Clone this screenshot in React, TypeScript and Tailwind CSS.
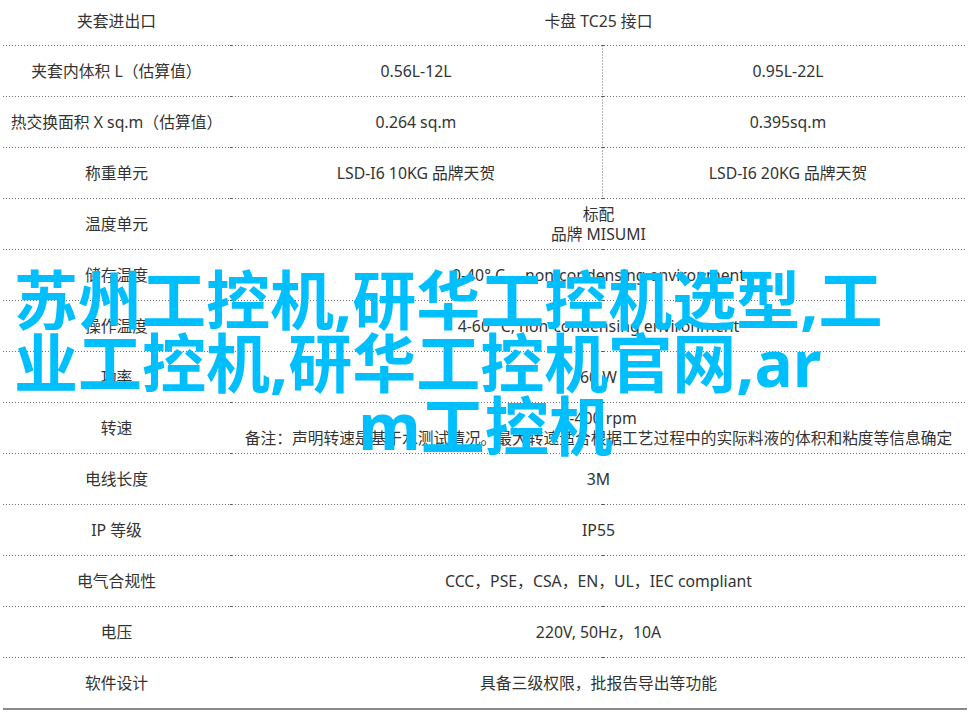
const FONT = "font-['Noto_Sans','Noto_Sans_CJK_SC',sans-serif]";
const DOTS = 'bg-[repeating-linear-gradient(90deg,#6f6f6f_0_1px,#ffffff_1px_3px)]';

type Row = { label: string; a: string; b?: string; note?: string };

const ROWS: Row[] = [
  { label: '夹套进出口', a: '卡盘 TC25 接口' },
  { label: '夹套内体积 L（估算值）', a: '0.56L-12L', b: '0.95L-22L' },
  { label: '热交换面积 X sq.m（估算值）', a: '0.264 sq.m', b: '0.395sq.m' },
  { label: '称重单元', a: 'LSD-I6 10KG 品牌天贺', b: 'LSD-I6 20KG 品牌天贺' },
  { label: '温度单元', a: '标配', note: '品牌 MISUMI' },
  { label: '储存温度', a: '0-40° C， non-condensing environment' },
  { label: '操作温度', a: '4-60° C, non-condensing environment' },
  { label: '功率', a: '60 W' },
  { label: '转速', a: '0-400 rpm', note: '备注：声明转速是基于水测试情况。最大转速适合根据工艺过程中的实际料液的体积和粘度等信息确定' },
  { label: '电线长度', a: '3M' },
  { label: 'IP 等级', a: 'IP55' },
  { label: '电气合规性', a: 'CCC，PSE，CSA，EN，UL，IEC compliant' },
  { label: '电压', a: '220V, 50Hz，10A' },
  { label: '软件设计', a: '具备三级权限，批报告导出等功能' },
];

function Separator() {
  return (
    <div className="flex h-px">
      <div className={`w-[227px] ${DOTS}`} />
      <div className="w-[2px] bg-[#555555]" />
      <div className={`w-[370px] ${DOTS}`} />
      <div className="w-[2px] bg-[#555555]" />
      <div className={`flex-1 ${DOTS}`} />
    </div>
  );
}

export default function App() {
  return (
    <div className={`relative h-[716px] w-[971px] overflow-hidden bg-white pl-[3px] pr-[4px] text-[15.8px] leading-[20px] text-[#333333] ${FONT}`}>
      <div className="flex flex-col">
        {ROWS.map((row, i) => (
          <div key={row.label}>
            <div
              className={`grid grid-cols-[227px_372px_365px] items-center text-center ${
                i === 0 ? 'h-[45px] pb-[4px]' : 'h-[50px]'
              }`}
            >
              <div>{row.label}</div>
              {row.b ? (
                <>
                  <div className="flex h-full items-center justify-center">{row.a}</div>
                  <div className="flex h-full items-center justify-center bg-[length:1px_3px] bg-left bg-repeat-y bg-[linear-gradient(#6f6f6f_0_1px,#ffffff_1px_3px)] pl-[7px]">
                    {row.b}
                  </div>
                </>
              ) : (
                <div className="col-span-2">
                  <div>{row.a}</div>
                  {row.note && <div className="whitespace-nowrap text-[15.73px]">{row.note}</div>}
                </div>
              )}
            </div>
            {i === ROWS.length - 1 ? <div className="h-[2px] bg-[#8a8a8a]" /> : <Separator />}
          </div>
        ))}
      </div>

      {/* 标题水印 */}
      <div className="absolute inset-x-0 top-[268px] text-[64px] font-bold leading-[63px] text-[#00bfff]">
        <div className="pl-[14px] whitespace-nowrap">苏州工控机,研华工控机选型,工</div>
        <div className="pl-[14px] whitespace-nowrap">业工控机,研华工控机官网,ar</div>
        <div className="text-center whitespace-nowrap">m工控机</div>
      </div>
    </div>
  );
}
